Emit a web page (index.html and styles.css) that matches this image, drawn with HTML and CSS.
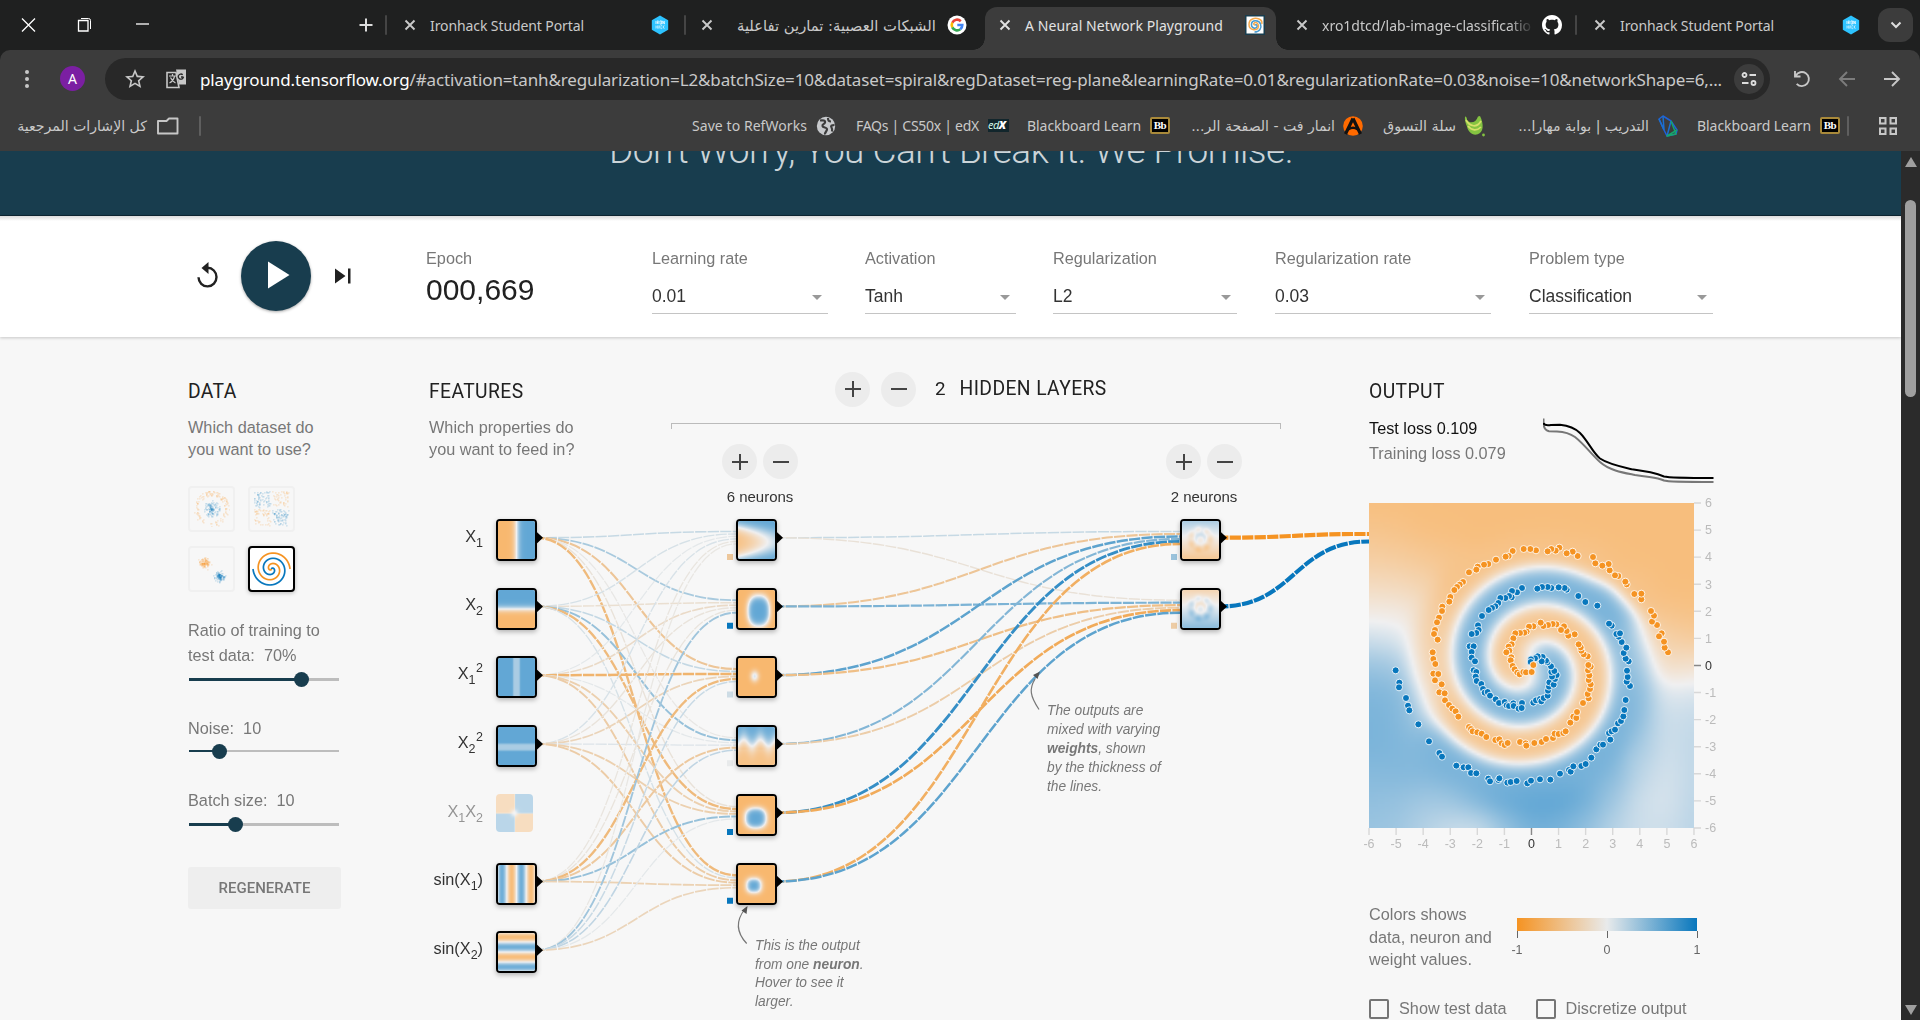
FILE: index.html
```html
<!DOCTYPE html>
<html lang="en">
<head>
<meta charset="utf-8">
<title>A Neural Network Playground</title>
<link rel="stylesheet" href="styles.css">
</head>
<body>
<svg class="defs" width="0" height="0" aria-hidden="true">
  <symbol id="x" viewBox="0 0 12 12"><path d="M1.500 1.500l9 9M10.500 1.500l-9 9" fill="none" stroke="currentColor" stroke-width="1.900"/></symbol>
</svg>

<div class="tabs">
  <svg class="win" viewBox="0 0 160 50" width="160" height="50"><g fill="none" stroke="#fff" stroke-width="1.300"><path d="M22 18.500l13 13M35 18.500l-13 13"/><path d="M78.500 20.500h9.500v10.500h-9.500z"/><path d="M81 18.500h7.500q2 0 2 2v8.500" stroke-width="1"/><path d="M136 24h13"/></g></svg>
  <svg class="plus" viewBox="0 0 14 14" width="14" height="14"><path d="M7 .5v13M.5 7h13" stroke="#ddd" stroke-width="2"/></svg>
  <i class="sep"></i>
  <div class="tab t1"><svg class="x"><use href="#x"/></svg><span data-fit="154">Ironhack Student Portal</span><svg class="fav" viewBox="0 0 20 22"><path d="M10 .5l9 5.200v10.600l-9 5.200-9-5.200V5.700z" fill="#2dc3ff"/><g fill="none" stroke="#fff" stroke-width=".8"><path d="M5.500 6.500v3.500M7 10V6.500h1.200q1 .9 0 1.800H7l1.600 1.700M10 6.500h1.700V10H10zM13 10V6.500l1.800 3.500V6.500"/><path opacity=".7" d="M5.500 11.500v3.500M7.200 11.500v3.500M5.500 13.200h1.700M8.200 15l.8-3.500.9 3.500M12.300 11.500h-1.300v3.500h1.300M13.500 11.500v3.500M15 11.500l-1.500 1.700 1.500 1.800"/></g></svg></div>
  <i class="sep"></i>
  <div class="tab t2"><svg class="x"><use href="#x"/></svg><span class="ar" dir="rtl" data-fit="199">الشبكات العصبية: تمارين تفاعلية</span>
    <svg class="fav" viewBox="0 0 20 20"><circle cx="10" cy="10" r="9.500" fill="#fff"/><g fill="none" stroke-width="2.600"><path d="M13.800 6.200A5.300 5.300 0 0 0 5.300 7.700" stroke="#ea4335"/><path d="M5.300 7.700a5.300 5.300 0 0 0 0 4.700" stroke="#fbbc05"/><path d="M5.300 12.400a5.300 5.300 0 0 0 8 1.800" stroke="#34a853"/><path d="M13.300 14.200a5.300 5.300 0 0 0 2-4.200h-5" stroke="#4285f4"/></g></svg></div>
  <div class="tab active"><svg class="x"><use href="#x"/></svg><span data-fit="198">A Neural Network Playground</span>
    <svg class="fav" viewBox="0 0 20 20"><rect width="20" height="20" fill="#183d4e"/><rect x="1.500" y="1.500" width="17" height="17" fill="#fff"/><g fill="none" stroke-width="1.500"><path d="M10 10c2-1 3 1 1.500 2.500S6 13 6.500 8.800 14 5 15.500 9s-1 8-6 8" stroke="#4a9bd0"/><path d="M10 10c-2 0-1.500-2.500.5-2.500s4 3 2.500 5.500-9 2.500-9-3.500 6-7 10-5.500 2.500 3 3 5" stroke="#f5a94d"/></g></svg></div>
  <div class="tab t4"><svg class="x"><use href="#x"/></svg><span class="fade" data-fit="209">xro1dtcd/lab-image-classificatio</span>
    <svg class="fav" viewBox="0 0 16 16"><path fill="#fff" d="M8 0C3.580 0 0 3.580 0 8c0 3.540 2.290 6.530 5.470 7.590.4.070.55-.17.55-.38 0-.19-.01-.82-.01-1.490-2.010.37-2.530-.49-2.690-.94-.09-.23-.48-.94-.82-1.130-.28-.15-.68-.52-.01-.53.63-.01 1.080.58 1.230.82.72 1.210 1.870.87 2.330.66.07-.52.28-.87.51-1.070-1.780-.2-3.640-.89-3.640-3.950 0-.87.31-1.590.82-2.150-.08-.2-.36-1.020.08-2.120 0 0 .67-.21 2.200.82.64-.18 1.320-.27 2-.27s1.360.09 2 .27c1.530-1.040 2.200-.82 2.200-.82.44 1.100.16 1.920.08 2.120.51.56.82 1.270.82 2.150 0 3.070-1.870 3.750-3.650 3.950.29.25.54.73.54 1.480 0 1.070-.01 1.930-.01 2.200 0 .21.15.46.55.38A8.010 8.010 0 0 0 16 8c0-4.420-3.580-8-8-8z"/></svg></div>
  <i class="sep"></i>
  <div class="tab t5"><svg class="x"><use href="#x"/></svg><span data-fit="154">Ironhack Student Portal</span><svg class="fav" viewBox="0 0 20 22"><path d="M10 .5l9 5.200v10.600l-9 5.200-9-5.200V5.700z" fill="#2dc3ff"/><g fill="none" stroke="#fff" stroke-width=".8"><path d="M5.500 6.500v3.500M7 10V6.500h1.200q1 .9 0 1.800H7l1.600 1.700M10 6.500h1.700V10H10zM13 10V6.500l1.800 3.500V6.500"/><path opacity=".7" d="M5.500 11.500v3.500M7.200 11.500v3.500M5.500 13.200h1.700M8.200 15l.8-3.500.9 3.500M12.300 11.500h-1.300v3.500h1.300M13.500 11.500v3.500M15 11.500l-1.500 1.700 1.500 1.800"/></g></svg></div>
  <div class="chev"><svg viewBox="0 0 12 12" width="12" height="12"><path d="M1.500 3.500L6 8l4.500-4.500" fill="none" stroke="#ddd" stroke-width="2"/></svg></div>
</div>

<div class="toolbar">
  <svg class="dots" viewBox="0 0 6 20" width="6" height="20"><g fill="#c7c7c7"><circle cx="3" cy="3" r="2"/><circle cx="3" cy="10" r="2"/><circle cx="3" cy="17" r="2"/></g></svg>
  <div class="avatar">A</div>
  <div class="omni">
    <svg class="star" viewBox="0 0 24 24" width="24" height="24"><path fill="#c7c7c7" d="M22 9.240l-7.190-.62L12 2 9.190 8.630 2 9.240l5.460 4.730L5.820 21 12 17.270 18.180 21l-1.630-7.030zM12 15.400l-3.760 2.270 1-4.280-3.320-2.880 4.380-.38L12 6.100l1.710 4.040 4.380.38-3.320 2.880 1 4.280z"/></svg>
    <svg class="trans" viewBox="0 0 22 22" width="22" height="22"><path d="M2 4.500h9l3 15H2z" fill="none" stroke="#c7c7c7" stroke-width="1.600"/><path d="M11 1.500h10v15h-7z" fill="#c7c7c7"/><path d="M4 8h7M7.500 6v2M9.500 8.500c-1 3.500-3 5.500-5 6.500M5.500 9.500c1 2.500 3 4.500 5 5.500" fill="none" stroke="#c7c7c7" stroke-width="1.200"/><path d="M18.500 9H16m2.500 0a2.600 2.600 0 1 1-.8-2.300" fill="none" stroke="#282828" stroke-width="1.300"/></svg>
    <span class="url" data-fit="1522"><b>playground.tensorflow.org</b>/#activation=tanh&amp;regularization=L2&amp;batchSize=10&amp;dataset=spiral&amp;regDataset=reg-plane&amp;learningRate=0.01&amp;regularizationRate=0.03&amp;noise=10&amp;networkShape=6,...</span>
    <div class="tune"><svg viewBox="0 0 16 16" width="16" height="16"><g fill="none" stroke="#ddd" stroke-width="1.800"><circle cx="3.500" cy="4" r="2"/><path d="M8.500 4H15M1 12h6.500"/><circle cx="12.500" cy="12" r="2"/></g></svg></div>
  </div>
  <svg class="nav" viewBox="0 0 130 24" width="130" height="24"><g fill="none" stroke-width="1.900"><path d="M10 5v5.500h5.500M10.700 9.800a7 7 0 1 1 1 8" stroke="#c7c7c7" transform="translate(-1 -1)"/><path d="M69 12H54.500M61 5l-7 7 7 7" stroke="#7c7c7c"/><path d="M98 12h15M106 5l7 7-7 7" stroke="#c7c7c7"/></g></svg>
</div>

<div class="marks">
  <span class="ar m0" dir="rtl" data-fit="130">كل الإشارات المرجعية</span>
  <svg class="folder" viewBox="0 0 22 18" width="22" height="18"><path d="M1 4v12.500h19.500V1.500H12L9.500 4z" fill="none" stroke="#c7c7c7" stroke-width="1.900" stroke-linejoin="round"/></svg>
  <i class="sep"></i>
  <span class="m1" data-fit="115">Save to RefWorks</span>
  <svg class="mi g1" viewBox="0 0 20 20" width="20" height="20"><circle cx="10" cy="10" r="9.200" fill="#c7c9cc"/><path d="M4 4.500c3-.5 5.500 0 5 2s-3 1.500-2.500 3.500 4 1 4.500 3-2.500 3-2 5.500M12 2c0 3 1 3.500 3 3.500M18.500 9c-3 0-4 1-3 2.500s1 2 .5 4" fill="none" stroke="#3c3c3c" stroke-width="2.200"/></svg>
  <span class="m2" data-fit="123">FAQs | CS50x | edX</span>
  <div class="mi edx g2">ed<b>X</b></div>
  <span class="m3" data-fit="114">Blackboard Learn</span>
  <div class="mi bb g3">Bb</div>
  <span class="ar m4" dir="rtl" data-fit="144">انمار فت - الصفحة الر...</span>
  <svg class="mi g4" viewBox="0 0 20 20" width="20" height="20"><circle cx="10" cy="10" r="9.800" fill="#ff6a00"/><path d="M10 2.500L2.500 18M10 2.500L17.500 18" stroke="#111" stroke-width="3.200"/><path d="M5.500 13.500q4.500-3.500 9 0" fill="none" stroke="#111" stroke-width="2.200"/></svg>
  <span class="ar m5" dir="rtl" data-fit="73">سلة التسوق</span>
  <svg class="mi g5" viewBox="0 0 22 22" width="22" height="22"><path d="M1 1.500q2 0 2 3.500c3 4 9 3 11-3.500l2-.5c4 8 4 17-3 18.500-5 1-9-3-10-8C1.500 8 .5 5 1 1.500z" fill="#84c341"/><path d="M2 5c4 7 11 8 15 1M4 11c4 5 9 5 13 1" fill="none" stroke="#d5e06a" stroke-width="1.700"/><circle cx="19.500" cy="20" r="1.400" fill="#84c341"/></svg>
  <span class="ar m6" dir="rtl" data-fit="131">التدريب | بوابة مهارا...</span>
  <svg class="mi g6" viewBox="0 0 22 22" width="22" height="22"><g fill="none" stroke-width="1.500" stroke-linejoin="round"><path d="M2 4l4-3 8 5 6 9-1 4-9 2-3-6z" stroke="#1f62d9"/><path d="M2 4l5 11M6 1l1 14M14 6l-4 15" stroke="#1c6fd0"/><path d="M14 6l5 13-9 2 10-6" stroke="#17a56c"/></g></svg>
  <span class="m7" data-fit="114">Blackboard Learn</span>
  <div class="mi bb g7">Bb</div>
  <i class="sep s2"></i>
  <svg class="apps" viewBox="0 0 18 18" width="18" height="18"><path d="M1 1h5.500v5.500H1zM11.500 1H17v5.500h-5.500zM1 11.500h5.500V17H1zM11.500 11.500H17V17h-5.500z" fill="none" stroke="#c7c7c7" stroke-width="2"/></svg>
</div>

<div class="view">
<div class="page">
  <header><h1 data-fit="684">Don't Worry, You Can't Break It. We Promise.</h1></header>
  <section class="controls">
    <svg class="reset" viewBox="0 0 24 30" width="24" height="30"><path d="M12.500 6.800a9 9.300 0 1 1-9 9.500" fill="none" stroke="#212121" stroke-width="2.400"/><path d="M13.500 1v12L6.500 7z" fill="#212121"/></svg>
    <div class="play"><svg viewBox="0 0 22 28" width="22" height="28"><path d="M0 .5L21.500 14 0 27.500z" fill="#fff"/></svg></div>
    <svg class="step" viewBox="0 0 16 16" width="16" height="16"><path d="M0 .5L10.500 8 0 15.500zM13 .5h2.500v15H13z" fill="#212121"/></svg>
    <div class="ctl epoch"><label>Epoch</label><strong>000,669</strong></div>
    <div class="ctl c1"><label>Learning rate</label><div class="sel">0.01</div></div>
    <div class="ctl c2"><label>Activation</label><div class="sel">Tanh</div></div>
    <div class="ctl c3"><label>Regularization</label><div class="sel">L2</div></div>
    <div class="ctl c4"><label>Regularization rate</label><div class="sel">0.03</div></div>
    <div class="ctl c5"><label>Problem type</label><div class="sel">Classification</div></div>
  </section>
  <main>
    <section class="data">
      <h2>Data</h2>
      <p>Which dataset do<br>you want to use?</p>
      <div class="thumbs">
        <canvas width="37" height="36" data-set="circle"></canvas><canvas width="37" height="36" data-set="xor"></canvas>
        <canvas width="37" height="36" data-set="gauss"></canvas><canvas width="78" height="76" data-set="spiral" class="on"></canvas>
      </div>
      <div class="slide s-a"><p>Ratio of training to<br>test data:&nbsp; 70%</p><div class="track"><i style="width:75%"></i><b style="left:75%"></b></div></div>
      <div class="slide s-b"><p>Noise:&nbsp; 10</p><div class="track"><i style="width:20%"></i><b style="left:20.700%"></b></div></div>
      <div class="slide s-c"><p>Batch size:&nbsp; 10</p><div class="track"><i style="width:31%"></i><b style="left:31%"></b></div></div>
      <button>Regenerate</button>
    </section>
    <section class="net" id="net">
      <div class="nethead">
        <div class="feat"><h2>Features</h2><p>Which properties do<br>you want to feed in?</p></div>
        <div class="layers"><i class="rnd add"></i><i class="rnd"></i><span>2</span><h2>Hidden layers</h2></div>
      </div>
      <div class="bracket"></div>
      <div class="counts">
        <div class="cnt"><div><i class="rnd add"></i><i class="rnd"></i></div>6 neurons</div>
        <div class="cnt"><div><i class="rnd add"></i><i class="rnd"></i></div>2 neurons</div>
      </div>
      <svg class="links" id="links" viewBox="429 337 940 683" width="940" height="683">
        <g class="names">
          <text x="483" y="542">X<tspan dy="5" class="s">1</tspan></text>
          <text x="483" y="610">X<tspan dy="5" class="s">2</tspan></text>
          <text x="475.500" y="679">X<tspan dy="5" class="s">1</tspan></text><text x="483" y="672" class="s">2</text>
          <text x="475.500" y="748">X<tspan dy="5" class="s">2</tspan></text><text x="483" y="741" class="s">2</text>
          <text x="483" y="817" opacity=".5">X<tspan dy="5" class="s">1</tspan><tspan dy="-5">X</tspan><tspan dy="5" class="s">2</tspan></text>
          <text x="483" y="885">sin(X<tspan dy="5" class="s">1</tspan><tspan dy="-5">)</tspan></text>
          <text x="483" y="954">sin(X<tspan dy="5" class="s">2</tspan><tspan dy="-5">)</tspan></text>
        </g>
        <g id="wires" fill="none"></g>
        <g fill="none" stroke="#777" stroke-width="1.200"><path d="M746.700 943.500C735 931 737 919 745 909"/><path d="M1039 709.500C1030 696 1029 689 1035 679"/></g>
        <path d="M747.500 906l-1 8-5-3.500zM1040 671.500l-2.500 7.500-4.500-4z" fill="#555"/>
        <g class="call">
          <text x="755" y="950">This is the output</text><text x="755" y="968.500">from one <tspan font-weight="700">neuron</tspan>.</text><text x="755" y="987">Hover to see it</text><text x="755" y="1006">larger.</text>
          <text x="1047" y="715">The outputs are</text><text x="1047" y="734">mixed with varying</text><text x="1047" y="753"><tspan font-weight="700">weights</tspan>, shown</text><text x="1047" y="772">by the thickness of</text><text x="1047" y="791">the lines.</text>
        </g>
      </svg>
    </section>
    <section class="out">
      <h2>Output</h2>
      <div class="loss">
        <div><p class="dark">Test loss 0.109</p><p>Training loss 0.079</p></div>
        <svg viewBox="1543 417 171 67" width="171" height="67"><g fill="none" stroke-width="2"><path stroke="#777" d="M1543.500 418.500V424Q1544 430 1549 431.200L1557 431.500Q1568 432 1575 437C1584 444 1594 457 1600 462C1610 471 1625 473 1635 475C1655 478 1657 477 1664 480.500C1668 482 1690 482 1713.500 482"/><path stroke="#000" d="M1543.500 423Q1544 426 1551 425L1560 424.700Q1573 426 1580 433C1588 441 1593 453 1600 458.500C1608 464 1622 467 1632 469.300C1655 473 1655 473 1664 476.500C1670 478 1690 478 1713.500 478"/></g></svg>
      </div>
      <div class="plot">
        <canvas id="heat" width="130" height="130"></canvas>
        <svg id="axes" viewBox="0 0 370 360" width="370" height="360"></svg>
      </div>
      <div class="legend">
        <p>Colors shows<br>data, neuron and<br>weight values.</p>
        <div class="scale"><div class="bar"></div><div class="nums"><span>-1</span><span>0</span><span>1</span></div></div>
      </div>
      <div class="checks"><i class="box"></i><span>Show test data</span><i class="box b2"></i><span>Discretize output</span></div>
    </section>
  </main>
</div>
<div class="scroll"><i class="up"></i><i class="thumb"></i><i class="down"></i></div>
</div>
<script src="main.js"></script>
</body>
</html>
```
FILE: styles.css
```css
* { box-sizing: border-box; }
body { margin: 0; width: 1920px; height: 1020px; overflow: hidden; background: #1f2020; font-family: "Liberation Sans", sans-serif; }
.defs { position: absolute; }
h1, h2, p { margin: 0; font-weight: 400; }

/* browser chrome */
.tabs, .toolbar, .marks { font-family: "Noto Sans", "DejaVu Sans", sans-serif; color: #c9c9c9; white-space: nowrap; }
.tabs span, .marks span { display: block; flex: none; }
.tabs { height: 50px; display: flex; align-items: center; font-size: 14px; }
.ar { font-family: "DejaVu Sans", sans-serif; font-size: 13px; }
.win { margin-right: 199px; flex: none; }
.plus { flex: none; margin-right: 12px; }
.sep { flex: none; width: 2px; height: 20px; background: #454545; border-radius: 1px; }
.tab { display: flex; align-items: center; flex: none; height: 50px; position: relative; }
.tab .x { width: 12px; height: 12px; color: #c9c9c9; flex: none; margin-right: 14px; }
.tab .fav { width: 20px; height: 20px; margin-left: auto; flex: none; }
.t1 { width: 297px; padding: 0 14px 0 17px; }
.t2 { width: 299px; padding: 0 18px 0 15px; }
.t2 .x { margin-right: 24px; }
.active { width: 291px; height: 43px; margin-top: 7px; padding: 0 11px 7px 14px; background: #3c3c3c; border-radius: 12px 12px 0 0; color: #e3e3e3; }
.active .x { color: #e3e3e3; }
.active::before, .active::after { content: ""; position: absolute; bottom: 0; width: 12px; height: 12px; }
.active::before { left: -12px; background: radial-gradient(circle at 0 0, transparent 11.500px, #3c3c3c 12px); }
.active::after { right: -12px; background: radial-gradient(circle at 100% 0, transparent 11.500px, #3c3c3c 12px); }
.t4 { width: 299px; padding: 0 13px 0 20px; }
.t5 { width: 295px; padding: 0 11px 0 17px; }
.t4 .fade { width: 212px; overflow: hidden; -webkit-mask-image: linear-gradient(90deg, #000 88%, transparent 100%); mask-image: linear-gradient(90deg, #000 88%, transparent 100%); }
.chev { width: 35px; height: 34px; margin-left: 6px; border-radius: 12px; background: #3c3c3c; display: flex; align-items: center; justify-content: center; flex: none; }
.toolbar { height: 57px; background: #3c3c3c; border-radius: 10px 10px 0 0; display: flex; align-items: center; }
.dots { margin-left: 24px; }
.avatar { margin: 0 20px 0 30px; width: 25px; height: 25px; border-radius: 50%; background: #7b1fa2; color: #fff; font: 14px/25px "Noto Sans", sans-serif; text-align: center; }
.omni { width: 1665px; height: 42px; border-radius: 21px; background: #282828; display: flex; align-items: center; font-size: 17px; padding: 0 6px 0 18px; }
.star { margin-right: 18px; }
.trans { margin-right: 13px; }
.url { display: block; flex: none; padding-top: 1px; }
.url b { font-weight: 400; color: #fff; }
.tune { width: 30px; height: 30px; border-radius: 50%; background: #3c3c3c; margin-left: auto; display: flex; align-items: center; justify-content: center; }
.nav { margin-left: 16px; }
.marks { height: 44px; background: #3c3c3c; display: flex; align-items: center; font-size: 14px; padding: 0 0 7px 17px; }
.marks > * { flex: none; }
.marks .sep { background: #5f5f5f; }
.m0 { width: 130px; } .folder { margin: 0 20px 0 10px; }
.m1 { width: 115px; margin-left: 491px; }
.g1 { margin: 0 20px 0 9px; }
.m2 { width: 123px; } .g2 { margin: 0 18px 0 9px; }
.m3, .m7 { width: 114px; } .g3 { margin: 0 21px 0 9px; }
.m4 { width: 144px; } .g4 { margin: 0 20px 0 8px; }
.m5 { width: 73px; } .g5 { margin: 0 32px 0 8px; }
.m6 { width: 131px; } .g6 { margin: 0 18px 0 8px; }
.g7 { margin: 0 7px 0 9px; }
.apps { margin-left: 30px; }
.edx { width: 21px; height: 13px; background: #12262c; color: #dfe; font: italic 11px/12px "Open Sans", sans-serif; letter-spacing: -.5px; }
.edx b { color: #fff; font-weight: 800; }
.bb { width: 20px; height: 17px; background: #000; border: 2px solid #a8893a; border-radius: 2px; color: #fff; font: 700 11px/13px "Liberation Serif", serif; letter-spacing: -.5px; text-align: center; }

/* viewport */
.view { height: 869px; display: flex; }
.page { width: 1901px; height: 869px; overflow: hidden; background: #f7f7f7; }
.scroll { width: 19px; background: #2b2b2b; display: flex; flex-direction: column; align-items: center; }
.scroll .up { border: 6.500px solid transparent; border-top: 0; border-bottom: 10px solid #9f9f9f; margin-top: 6px; }
.scroll .thumb { width: 11px; height: 197px; margin-top: 33px; border-radius: 6px; background: #9f9f9f; }
.scroll .down { margin-top: auto; margin-bottom: 5px; border: 6.500px solid transparent; border-bottom: 0; border-top: 10px solid #9f9f9f; }
header { height: 65px; background: #183d4e; border-bottom: 1px solid #0e2733; overflow: hidden; padding-left: 609px; }
header h1 { font: 300 37px/40px Roboto, sans-serif; color: rgba(255,255,255,.78); white-space: nowrap; margin-top: -20px; }
.controls { height: 121px; background: linear-gradient(#dcdcdc, #fff 5px); display: flex; box-shadow: 0 1px 3px rgba(0,0,0,.2); position: relative; padding-left: 195px; }
.reset { margin: 45px 22px 0 0; }
.play { width: 70px; height: 70px; border-radius: 50%; background: #183d4e; margin-top: 25px; padding: 20px 0 0 27px; box-shadow: 0 1px 3px rgba(0,0,0,.35); }
.step { margin: 52px 0 0 24px; }
.ctl { padding-top: 33px; }
.ctl label, .data p, .feat p, .out p { display: block; font-size: 16.250px; line-height: 18px; color: #777; }
.epoch { margin-left: 75px; width: 226px; }
.epoch strong { display: block; font: 30px/34px "Liberation Sans", sans-serif; color: #212121; margin-top: 6px; }
.sel { height: 36px; margin-top: 11px; border-bottom: 1px solid #c4c4c4; font-size: 17.500px; line-height: 36px; color: #333; position: relative; }
.sel::after { content: ""; position: absolute; right: 6px; top: 17px; border: 5px solid transparent; border-top-color: #999; border-bottom: 0; }
.c1 { width: 176px; } .c2 { width: 151px; margin-left: 37px; } .c3 { width: 184px; margin-left: 37px; }
.c4 { width: 216px; margin-left: 38px; } .c5 { width: 184px; margin-left: 38px; }

main { display: flex; height: 683px; padding-left: 188px; }
h2 { font: 19.300px/22px Roboto, sans-serif; letter-spacing: .4px; color: #212121; text-transform: uppercase; }
.data { width: 241px; padding-top: 44px; }
.data > p, .feat p { line-height: 22px; margin-top: 13px; }
.thumbs { display: grid; grid-template-columns: 47px 47px; gap: 14px 13px; margin-top: 26px; }
.thumbs canvas { width: 47px; height: 46px; border: 2px solid #f0f0f0; border-radius: 4px; padding: 3px; }
.thumbs canvas.on { border-color: #000; background: #fff; padding: 2px; box-shadow: 0 1px 4px rgba(0,0,0,.25); }
.slide p { line-height: 25px; }
.track { width: 150px; height: 3px; margin-left: 1px; background: #bdbdbd; position: relative; }
.track i { display: block; height: 3px; background: #183d4e; }
.track b { position: absolute; width: 15px; height: 15px; border-radius: 50%; background: #183d4e; top: -6px; margin-left: -8px; }
.s-a { margin-top: 26px; } .s-a .track { margin-top: 10px; }
.s-b { margin-top: 35px; } .s-b .track { margin-top: 9px; height: 2px; } .s-b .track i { height: 2px; }
.s-c { margin-top: 36px; } .s-c .track { margin-top: 10px; }
.data button { display: block; margin-top: 41px; width: 153px; height: 42px; border: 0; border-radius: 3px; background: #eee; color: #777; font: 500 15px Roboto, sans-serif; text-transform: uppercase; }

.net { width: 940px; position: relative; }
.nethead { display: flex; height: 86px; }
.feat { width: 406px; padding-top: 44px; white-space: nowrap; }
.layers { display: flex; height: 36px; margin-top: 34px; align-items: center; }
.layers .rnd { margin-right: 11px; }
.layers span { font: 18.750px Roboto, sans-serif; color: #212121; margin: 0 14px 0 8px; }
.rnd { display: inline-block; width: 35px; height: 35px; border-radius: 50%; background: linear-gradient(#444,#444) center/16px 2px no-repeat #ececec; }
.rnd.add { background: linear-gradient(#444,#444) center/16px 2px no-repeat, linear-gradient(#444,#444) center/2px 16px no-repeat #ececec; }
.bracket { width: 610px; height: 6px; margin-left: 242px; border: 1px solid #bbb; border-bottom: 0; }
.counts { display: flex; margin: 15px 0 0 293px; gap: 368px; }
.cnt { width: 76px; text-align: center; font-size: 15px; line-height: 17px; color: #333; white-space: nowrap; }
.cnt > div { display: flex; justify-content: space-between; height: 35px; margin-bottom: 9px; }
.links { position: absolute; left: 0; top: 0; }
.names text { font-size: 16.250px; text-anchor: end; fill: #333; }
.names .s { font-size: 12.500px; }
.call text { font-size: 13.750px; font-style: italic; fill: #777; }
.node { position: absolute; width: 41px; height: 42px; border: 2px solid #000; border-radius: 4px; box-shadow: 0 2px 5px rgba(0,0,0,.28); }
.node.off { border: 0; width: 37px; height: 38px; opacity: .42; box-shadow: none; }

.out { width: 360px; padding-top: 44px; }
.loss { display: flex; justify-content: space-between; width: 345px; height: 70px; }
.loss p { line-height: 25px; white-space: nowrap; }
.loss div { padding-top: 12.500px; }
.loss p.dark { color: #111; }
.loss svg { margin-top: 14px; }
.plot { width: 325px; height: 325px; margin-top: 30px; position: relative; }
#heat { display: block; width: 325px; height: 325px; }
#axes { position: absolute; left: -10px; top: -10px; }
#axes text { font-size: 12.500px; fill: #bbb; }
#axes .z { fill: #333; }
.legend { display: flex; margin-top: 75px; }
.legend p { width: 148px; line-height: 22.500px; }
.scale { width: 180px; padding-top: 15px; }
.bar { height: 13px; background: linear-gradient(90deg, #f59322, #e8eaeb, #0877bd); }
.nums { display: flex; justify-content: space-between; font-size: 12.500px; color: #666; margin: 0 -20px; }
.nums span { width: 40px; text-align: center; line-height: 14px; }
.nums span::before { content: ""; display: block; width: 1px; height: 7px; background: #666; margin: 0 auto 5px; }
.checks { display: flex; align-items: center; margin-top: 28px; font-size: 16.250px; color: #777; white-space: nowrap; }
.box { width: 20px; height: 20px; border: 2px solid #757575; border-radius: 2px; margin-right: 10px; flex: none; }
.b2 { margin-left: 29px; }
```
FILE: main.js
```js
// Stretch labels to their slot: tracking for Latin, size for Arabic.
document.querySelectorAll('[data-fit]').forEach(function (el) {
  var want = +el.dataset.fit, r = document.createRange();
  r.selectNodeContents(el);
  var w = r.getBoundingClientRect().width;
  if (el.classList.contains('ar')) {
    el.style.fontSize = parseFloat(getComputedStyle(el).fontSize) * want / w + 'px';
  } else {
    el.style.letterSpacing = (want - w) / el.textContent.length + 'px';
  }
});

// Line colours run from orange (-1) through grey (0) to blue (1);
// the heat maps use a slightly lighter ramp.
var LINE = [[245, 147, 34], [232, 234, 235], [8, 119, 189]];
var MAP = [[253, 151, 34], [240, 240, 241], [14, 124, 196]];
function rgb(v, ramp) {
  v = Math.max(-1, Math.min(1, v));
  var a = ramp[1], b = v < 0 ? ramp[0] : ramp[2], t = Math.abs(v);
  return a.map(function (c, i) { return Math.round(c + (b[i] - c) * t); });
}
function css(v) { return 'rgb(' + rgb(v, LINE).join() + ')'; }
function paint(c, f) {
  var n = c.width, m = c.height, x = c.getContext('2d'), d = x.createImageData(n, m);
  for (var j = 0; j < m; j++) for (var i = 0; i < n; i++) {
    var k = 4 * (j * n + i), p = rgb(f((i + 0.5) / n, (j + 0.5) / m), MAP);
    d.data[k] = p[0]; d.data[k + 1] = p[1]; d.data[k + 2] = p[2]; d.data[k + 3] = 255;
  }
  x.putImageData(d, 0, 0);
}
var seed = 7;
function rnd() { seed = (seed * 16807) % 2147483647; return seed / 2147483647; }
function gs() { return (rnd() + rnd() + rnd() + rnd() - 2) * 0.9; }
var th = Math.tanh;

// Nodes
function blob(cx, cy, rx, ry, k) {
  return function (u, v) {
    var d = Math.pow(Math.pow(Math.abs(u - cx) / rx, 2.4) + Math.pow(Math.abs(v - cy) / ry, 2.4), 1 / 2.4);
    return 0.63 * th((1 - d) * k);
  };
}
function swirl(s) {
  return function (u, v) {
    var r = Math.hypot(u - 0.5, v - 0.48), a = Math.atan2(v - 0.48, u - 0.5);
    return s * ((0.4 - v) * 0.75 - 0.15 * Math.exp(-Math.pow((r - 0.27) / 0.09, 2)) * (1 + 0.3 * Math.cos(7 * a)) + 0.12 * Math.exp(-Math.pow((r - 0.12) / 0.06, 2)));
  };
}
var inputs = [
  function (u) { return 0.63 * th((u - 0.5) * 10); },
  function (u, v) { return 0.63 * th((0.5 - v) * 10); },
  function (u) { return 0.63 - 0.32 / (1 + Math.exp((Math.abs(u - 0.5) - 0.09) * 90)); },
  function (u, v) { return 0.63 - 0.32 / (1 + Math.exp((Math.abs(v - 0.53) - 0.09) * 90)); },
  function (u, v) { return -0.6 * th((u - 0.51) * 90) * th((v - 0.51) * 90) * (1 - Math.exp(-(Math.pow(u - 0.5, 2) + Math.pow(v - 0.5, 2)) * 110)); },
  function (u) { return 0.57 * Math.sin(12 * (u - 0.5)); },
  function (u, v) { return 0.57 * Math.sin(12 * (0.5 - v)); }
];
var hidden = [
  function (u, v) { return Math.max(-0.5, Math.min(0.6, 0.62 * th(((u - 0.8) + Math.pow(v - 0.55, 2) * 5.5) * 1.4))); },
  blob(0.56, 0.55, 0.29, 0.4, 3.5),
  function (u, v) { return -0.63 + 0.72 * Math.exp(-Math.pow((u - 0.45) / 0.11, 2) - Math.pow((v - 0.48) / 0.14, 2)); },
  function (u, v) { return 0.61 * th((0.42 + 0.08 * Math.cos((u - 0.38) * 14) - v) * 4) * (v > 0.6 ? 0.85 : 1); },
  blob(0.48, 0.58, 0.28, 0.26, 3),
  blob(0.43, 0.54, 0.19, 0.18, 2.2)
];
var net = document.getElementById('net'), wires = document.getElementById('wires'), links = document.getElementById('links');
var NS = 'http://www.w3.org/2000/svg';
function add(parent, tag, at) {
  var e = document.createElementNS(NS, tag);
  for (var k in at) e.setAttribute(k, at[k]);
  parent.appendChild(e);
  return e;
}
function node(x, row, f, off) {
  var c = document.createElement('canvas'), y = 518.9 + 68.75 * row;
  c.width = 37; c.height = 37;
  c.className = off ? 'node off' : 'node';
  c.style.left = x - 429 + 'px';
  c.style.top = Math.round(y) - 337 + 'px';
  paint(c, f);
  net.appendChild(c);
  if (!off) {
    y += 18.75;
    add(links, 'path', { d: 'M' + (x + 40) + ' ' + (y - 6.5) + 'l7 6.500-7 6.500z', fill: '#000' });
  }
}
function link(x1, r1, x2, r2, i, n, w) {
  var y1 = 537.7 + 68.75 * r1, y2 = 537.7 + 68.75 * r2 + (i - (n - 1) / 2) / n * 15, m = (x1 + x2) / 2;
  add(wires, 'path', {
    d: 'M' + x1 + ' ' + y1 + 'C' + m + ' ' + y1 + ' ' + m + ' ' + y2 + ' ' + x2 + ' ' + y2,
    stroke: css(w), 'stroke-width': 1.2 + Math.abs(w) * 2.1, 'stroke-dasharray': '11.25 1.25', 'stroke-dashoffset': 3
  });
}
var rows = [0, 1, 2, 3, 5, 6];
var w1 = [
  [0.15, 0.28, -0.42, -0.03, -0.09, -0.55],
  [0.08, -0.13, 0.16, 0.36, -0.55, 0.08],
  [0.02, -0.18, -0.62, 0.02, -0.3, -0.34],
  [0.07, -0.08, -0.25, 0.05, -0.3, -0.34],
  [-0.06, -0.07, -0.55, -0.38, 0.36, -0.28],
  [-0.04, 0.32, 0.14, 0.18, 0.02, -0.24]
];
w1.forEach(function (ws, i) { ws.forEach(function (w, t) { link(536, rows[i], 736, t, i, 6, w); }); });
[[0.15, -0.1], [-0.42, 0.48], [0.62, -0.5], [0.45, -0.33], [0.8, -0.72], [-0.68, 0.62]].forEach(function (ws, i) {
  ws.forEach(function (w, t) { link(776, i, 1180, t, i, 6, w); });
});
link(1220, 0, 1369, 0, 0, 2, -1.4);
link(1220, 1, 1369, 0, 1, 2, 1.4);
inputs.forEach(function (f, i) { node(496, i, f, i === 4); });
hidden.forEach(function (f, i) { node(736, i, f); });
node(1180, 0, swirl(1)); node(1180, 1, swirl(-1));
[-0.4, 1, 0.12, 0, 1, 1].forEach(function (b, i) { add(links, 'rect', { x: 727, y: 554 + 68.75 * i, width: 6, height: 6, fill: css(b) }); });
[0.35, -0.35].forEach(function (b, i) { add(links, 'rect', { x: 1171, y: 554 + 68.75 * i, width: 6, height: 6, fill: css(b) }); });

// Output heat map: normalised Gaussian blend of samples
var S = [];
for (var i = 3; i < 66; i++) {
  var r = i / 65 * 5, t = 3.5 * Math.PI * i / 65;
  if (r < 4.7) S.push([r * Math.sin(t), r * Math.cos(t), 0.54, 1.3, 0.5]);
  S.push([-r * Math.sin(t), -r * Math.cos(t), -0.5, r > 4.6 ? 0.3 : 1.3, 0.5]);
}
var far = {
  6: [-.55, -.55, -.56, -.56, -.56, -.56, -.56, -.56, -.56, -.56, -.56, -.56, -.56],
  5: [-.48, -.5, -.54, -.55, -.56, -.56, -.56, -.56, -.56, -.56, -.56, -.56, -.56],
  4: [-.38, -.4, -.44, -.48, null, null, null, null, null, -.55, -.56, -.56, -.56],
  3: [-.24, -.26, -.32, null, null, null, null, null, null, null, -.5, -.56, -.56],
  2: [-.08, -.08, -.14, null, null, null, null, null, null, null, null, -.5, -.52],
  1: [.15, .1, -.02, null, null, null, null, null, null, null, -.1, -.35, -.42],
  0: [.38, .35, .12, null, null, null, null, null, null, null, .1, -.12, -.18],
  '-1': [.5, .48, .3, null, null, null, null, null, null, null, .35, .06, .12],
  '-2': [.52, .5, .3, null, null, null, null, null, null, null, .38, .14, .2],
  '-3': [.52, .5, .45, null, null, null, null, null, null, null, .34, .13, .22],
  '-4': [.46, .48, .48, .48, null, null, null, null, null, .5, .22, .11, .22],
  '-5': [.42, .4, .34, .36, .5, .62, .67, .66, .57, .36, .14, .1, .24],
  '-6': [.38, .36, .26, .16, .12, .36, .54, .52, .4, .24, .15, .15, .25]
};
Object.keys(far).forEach(function (y) { far[y].forEach(function (v, k) { if (v !== null) S.push([k - 6, +y, v, 0.85, 0.66]); }); });
paint(document.getElementById('heat'), function (u, v) {
  var x = u * 12 - 6, y = 6 - v * 12, a = 0, b = 0;
  for (var k = 0; k < S.length; k++) {
    var s = S[k], d = (x - s[0]) * (x - s[0]) + (y - s[1]) * (y - s[1]), w = s[3] * Math.exp(-d / s[4]) + 1e-12;
    a += w * s[2]; b += w;
  }
  return a / b;
});

// Axes and samples
var ax = document.getElementById('axes');
for (i = -6; i <= 6; i++) {
  var p = 10 + (i + 6) * 27.08, q = 10 + (6 - i) * 27.08, col = i ? '#d8d8d8' : '#888';
  add(ax, 'path', { d: 'M' + p + ' 335v7M335 ' + q + 'h7', stroke: col, 'stroke-width': 1.4 });
  add(ax, 'text', { x: p, y: 355, 'text-anchor': 'middle', 'class': i ? '' : 'z' }).textContent = i;
  add(ax, 'text', { x: 346, y: q + 4.3, 'class': i ? '' : 'z' }).textContent = i;
}
var blue = '107,541 118,578 117,592 138,624 144,647 148,661 175,703 207,754 238,789 246,800 289,827 311,832 325,832 333,849 349,850 385,866 390,874 415,870 418,865 442,878 452,876 470,873 502,880 513,872 540,868 571,869 600,851 627,840 632,845 640,829 664,828 677,822 694,803 709,778 721,764 729,764 751,749 747,729 755,724 765,719 774,700 783,693 790,679 793,660 797,630 810,588 800,575 803,561 801,542 806,514 797,506 791,489 799,473 785,456 776,440 769,432 780,430 755,407 747,401 712,347 676,336 655,318 620,299 614,294 596,292 574,294 563,291 546,291 532,296 486,294 471,307 456,303 455,322 447,318 436,324 421,324 415,339 406,349 396,354 386,360 366,378 354,406 356,420 349,429 335,432 329,469 341,469 335,486 335,503 345,514 341,541 349,546 347,560 350,573 364,582 369,597 374,608 383,606 390,617 407,628 417,639 434,636 440,646 447,648 460,640 461,648 476,656 486,639 485,654 520,638 528,631 540,627 544,634 551,624 563,617 564,602 567,590 568,577 581,584 585,567 590,555 576,560 574,546 583,543 573,529 562,517 558,512 548,501 545,514 533,499 525,505 513,508 512,516';
var orange = '924,487 914,473 912,455 905,430 897,439 891,405 876,395 882,377 873,363 844,328 844,311 823,312 800,283 796,275 775,258 765,256 749,241 746,222 727,227 706,220 699,201 653,198 638,185 620,190 598,173 587,182 574,177 563,184 528,181 511,177 491,177 458,183 446,198 437,200 408,209 385,222 372,224 353,230 349,239 327,247 309,276 299,284 291,291 283,300 271,321 268,335 247,350 246,363 237,383 231,397 225,420 222,432 233,449 218,487 220,507 226,522 220,551 235,552 225,571 245,583 238,607 254,610 255,631 267,645 277,656 287,664 295,680 327,711 333,717 338,724 352,727 365,731 379,741 406,750 418,748 425,760 434,765 443,759 480,756 497,760 499,767 523,759 545,756 558,747 579,744 584,731 596,732 610,729 617,724 631,698 640,680 649,684 651,666 669,639 686,625 683,612 690,597 692,583 686,570 688,556 684,541 692,530 685,525 683,499 671,493 664,482 662,472 656,463 644,433 625,437 620,423 612,409 603,420 589,403 578,402 564,405 550,408 542,398 520,409 507,410 500,425 493,428 480,429 466,430 460,445 455,463 446,470 448,482 439,487 454,502 452,511 458,528 464,538 472,548 479,553 490,546 498,547 515,546 520,525';
[[blue, '#0877bd'], [orange, '#f59322']].forEach(function (g) {
  g[0].split(' ').forEach(function (s) {
    var c = s.split(',');
    add(ax, 'circle', { cx: (c[0] - 27) / 3 + 10, cy: (c[1] - 39) / 3 + 10, r: 3.5, fill: g[1], stroke: '#fff', 'stroke-opacity': 0.85, 'stroke-width': 1 });
  });
});

// Dataset thumbnails
var pal = { b: 'rgba(8,119,189,.15)', o: 'rgba(245,147,34,.15)' };
document.querySelectorAll('[data-set]').forEach(function (c) {
  var x = c.getContext('2d'), k = c.dataset.set, i, a, r;
  function dot(px, py, col) { x.fillStyle = pal[col]; x.fillRect(Math.round(px), Math.round(py), 1.6, 1.6); }
  if (k === 'spiral') {
    [['#0877bd', 1], ['#f59322', -1]].forEach(function (g) {
      x.beginPath(); x.lineWidth = 3.4; x.strokeStyle = g[0];
      for (i = 0; i <= 100; i++) { r = i / 100 * 37; a = 3.5 * Math.PI * i / 100; x.lineTo(39 + g[1] * r * Math.sin(a), 38 - g[1] * r * Math.cos(a)); }
      x.stroke();
    });
    return;
  }
  for (i = 0; i < 250; i++) {
    if (k === 'circle') {
      a = rnd() * 6.283; r = i % 2 ? rnd() * 8.5 : 13 + rnd() * 5;
      dot(18 + r * Math.cos(a), 17.5 + r * Math.sin(a), i % 2 ? 'b' : 'o');
    } else if (k === 'xor') {
      var px = 2 + rnd() * 32, py = 1 + rnd() * 32;
      px += px > 18 ? 1 : -1; py += py > 17 ? 1 : -1;
      dot(px, py, (px > 18) === (py > 17) ? 'b' : 'o');
    } else if (i % 2) dot(26 + gs() * 4.5, 25 + gs() * 4.5, 'b'); else dot(11 + gs() * 4.5, 11 + gs() * 4.5, 'o');
  }
});
```
